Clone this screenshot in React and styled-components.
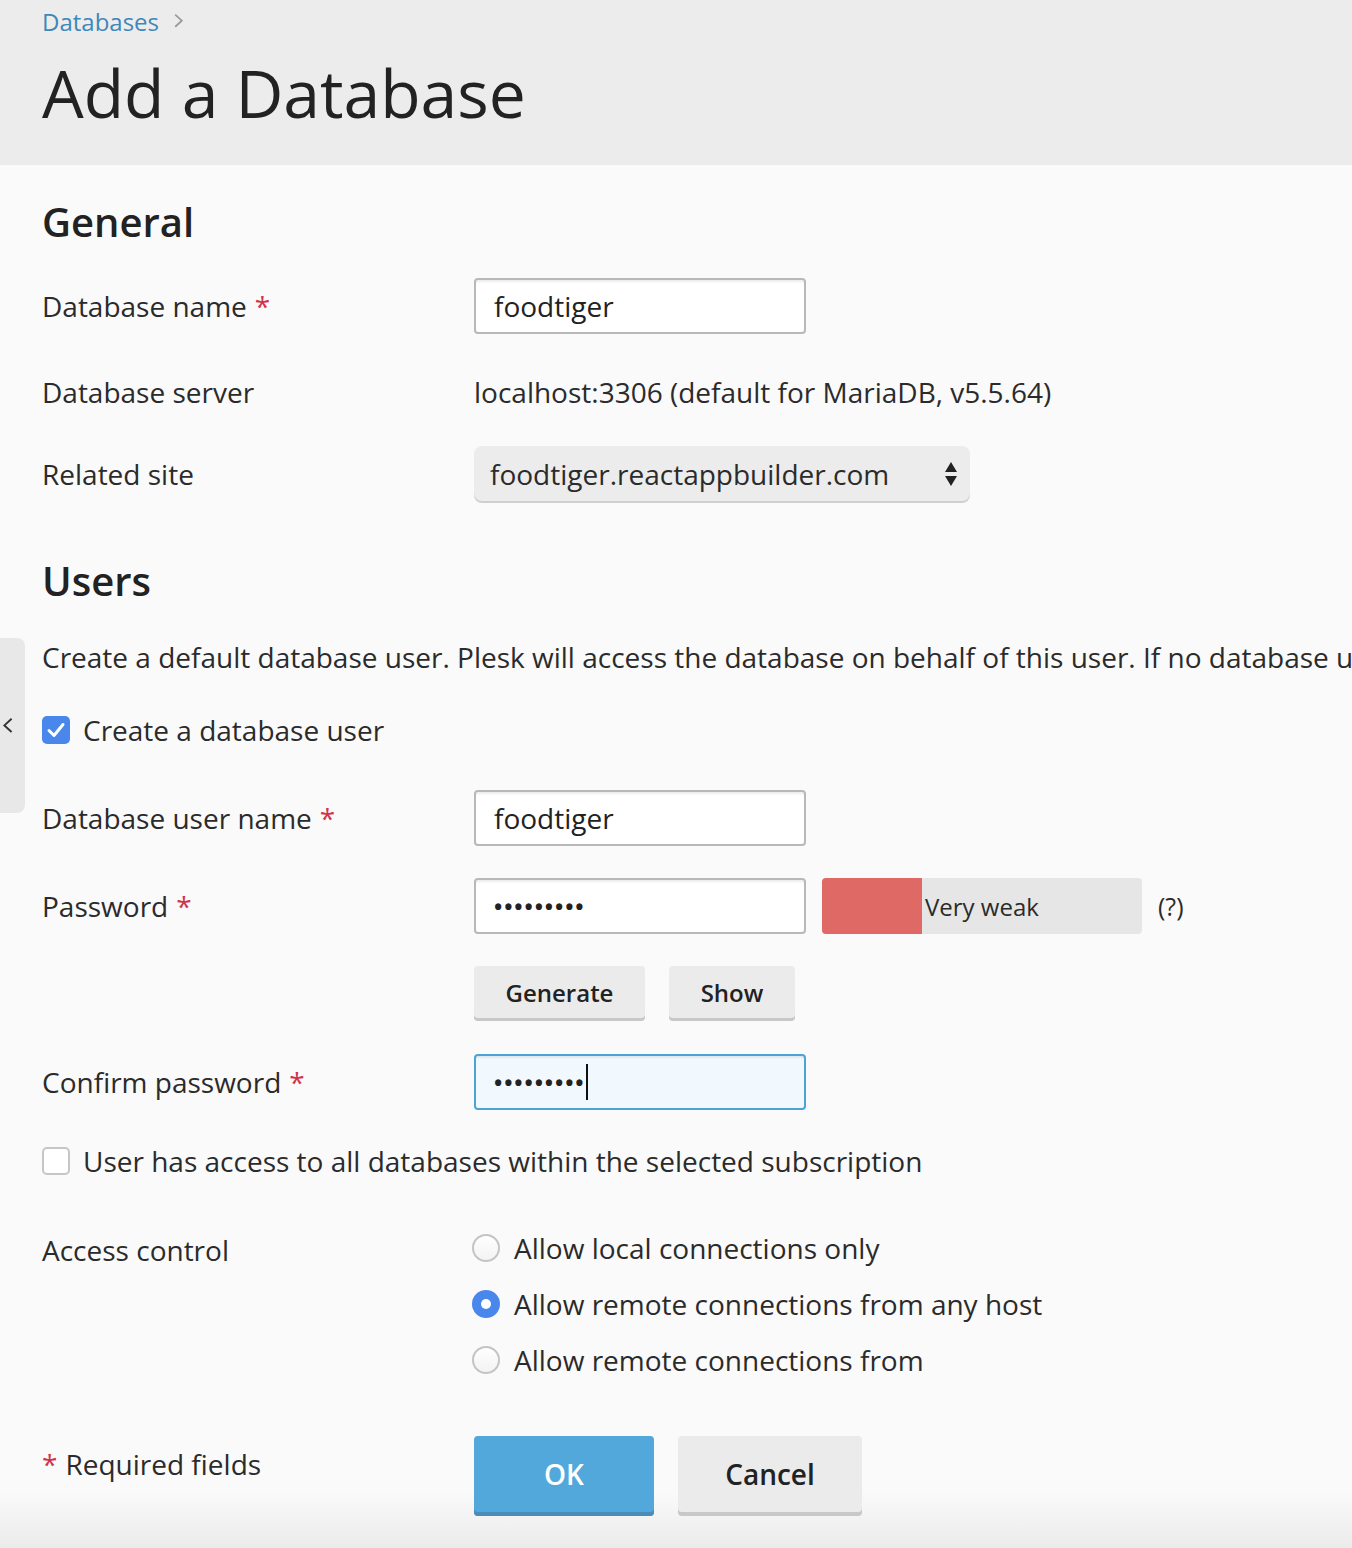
import React from 'react';
import styled, { createGlobalStyle } from 'styled-components';

const GlobalStyle = createGlobalStyle`
  html, body {
    margin: 0;
    padding: 0;
  }
  body {
    font-family: "Open Sans", "Noto Sans", sans-serif;
    color: #2b2b2b;
    background: linear-gradient(to bottom, #fafafa 0, #fafafa 1492px, #ebebeb 1548px);
    min-height: 1548px;
    overflow: hidden;
  }
`;

const Page = styled.div`
  position: relative;
  width: 1352px;
  min-height: 1548px;
  overflow: hidden;
`;

const Header = styled.header`
  background: #ececec;
  height: 165px;
  padding: 0 42px;
  box-sizing: border-box;
`;

const Crumbs = styled.div`
  display: flex;
  align-items: center;
  gap: 14px;
  height: 42px;
  font-size: 24px;
  color: #3d88bb;
`;

const CrumbArrow = styled.span`
  color: #999;
  display: flex;
  align-items: center;
`;

const Title = styled.h1`
  margin: 0;
  font-size: 66px;
  font-weight: 400;
  line-height: 100px;
  color: #222;
`;

const Content = styled.main`
  padding: 0 42px;
`;

const SectionTitle = styled.h2`
  margin: ${(p) => p.$top}px 0 0;
  font-size: 40px;
  font-weight: 600;
  line-height: 54px;
  color: #222;
`;

const Row = styled.div`
  display: grid;
  grid-template-columns: 432px auto;
  align-items: ${(p) => (p.$start ? 'start' : 'center')};
  min-height: 55px;
  margin-top: ${(p) => p.$top}px;
  font-size: 28px;
`;

const Label = styled.div`
  line-height: 40px;
  padding-top: ${(p) => p.$pad || 0}px;
`;

const Req = styled.span`
  color: #d2334c;
  margin: ${(p) => (p.$lead ? '0 8px 0 0' : '0 0 0 8px')};
`;

const Field = styled.div`
  display: flex;
  align-items: center;
  gap: 16px;
`;

const TextInput = styled.div`
  box-sizing: border-box;
  width: 332px;
  height: 56px;
  display: flex;
  align-items: center;
  padding-left: 18px;
  font-size: 28px;
  border: 2px solid ${(p) => (p.$focus ? '#4da3d6' : '#b8b8b8')};
  border-radius: 4px;
  background: ${(p) => (p.$focus ? '#f1f8fe' : '#fff')};
  box-shadow: inset 0 3px 2px -1px rgba(0, 0, 0, 0.07);
  color: #222;
`;

const Dots = styled.span`
  font-size: 22px;
  letter-spacing: 1.9px;
  font-weight: 700;
`;

const Caret = styled.span`
  display: inline-block;
  width: 2px;
  height: 36px;
  background: #111;
  margin-left: 0;
`;

const Plain = styled.div`
  line-height: 40px;
`;

const Select = styled.div`
  box-sizing: border-box;
  width: 496px;
  height: 55px;
  display: flex;
  align-items: center;
  justify-content: space-between;
  padding: 0 12px 0 16px;
  background: #ececec;
  border-radius: 8px;
  box-shadow: 0 2px 0 #cfcfcf;
`;

const Strength = styled.div`
  width: 320px;
  height: 56px;
  display: flex;
  align-items: center;
  background: #e6e6e6;
  border-radius: 4px;
  overflow: hidden;
  font-size: 24px;
`;

const StrengthFill = styled.div`
  width: 100px;
  height: 100%;
  background: #df6965;
  margin-right: 3px;
`;

const Hint = styled.span`
  font-size: 25px;
`;

const Buttons = styled.div`
  display: flex;
  gap: 24px;
`;

const Button = styled.button`
  font-family: inherit;
  font-size: ${(p) => (p.$big ? 28 : 24)}px;
  font-weight: 600;
  width: ${(p) => p.$w}px;
  height: ${(p) => p.$h}px;
  border: none;
  border-radius: 4px;
  color: ${(p) => (p.$primary ? '#fff' : '#222')};
  background: ${(p) => (p.$primary ? '#52a8da' : '#ebebeb')};
  box-shadow: inset 0 -${(p) => (p.$big ? 4 : 3)}px 0 ${(p) => (p.$primary ? '#4a8db8' : '#c8c8c8')};
  padding: 0 0 ${(p) => (p.$big ? 4 : 3)}px;
`;

const Intro = styled.div`
  margin-top: ${(p) => p.$top}px;
  font-size: 28px;
  line-height: 40px;
  white-space: nowrap;
`;

const CheckRow = styled.label`
  display: flex;
  align-items: center;
  gap: 13px;
  font-size: 28px;
  line-height: 40px;
  margin-top: ${(p) => p.$top}px;
  white-space: nowrap;
`;

const Box = styled.span`
  box-sizing: border-box;
  width: 28px;
  height: 28px;
  border-radius: 5px;
  display: flex;
  align-items: center;
  justify-content: center;
  background: ${(p) => (p.$on ? '#4a87ec' : '#fff')};
  border: ${(p) => (p.$on ? 'none' : '2px solid #c6c6c6')};
`;

const Radios = styled.div`
  display: flex;
  flex-direction: column;
`;

const RadioOption = styled.div`
  display: flex;
  align-items: center;
  gap: 14px;
  height: 56px;
  margin-left: -2px;
`;

const RadioDot = styled.span`
  box-sizing: border-box;
  width: 28px;
  height: 28px;
  border-radius: 50%;
  display: flex;
  align-items: center;
  justify-content: center;
  background: ${(p) => (p.$on ? '#4a87ec' : 'linear-gradient(#fff, #f3f3f3)')};
  border: ${(p) => (p.$on ? 'none' : '2px solid #c4c4c4')};
  &::after {
    content: '';
    display: ${(p) => (p.$on ? 'block' : 'none')};
    width: 10px;
    height: 10px;
    border-radius: 50%;
    background: #fff;
  }
`;

const SideTab = styled.div`
  position: absolute;
  left: 0;
  top: 638px;
  width: 25px;
  height: 175px;
  background: #e8e8e8;
  border-radius: 0 8px 8px 0;
  display: flex;
  align-items: center;
  padding-left: 2px;
  box-sizing: border-box;
`;

const Chevron = ({ dir = 'right', size = 14, color = '#999', w = 2 }) => (
  <svg width={size} height={size * 1.4} viewBox="0 0 10 14" fill="none">
    <path
      d={dir === 'right' ? 'M2 1.5 L8 7 L2 12.5' : 'M8 1.5 L2 7 L8 12.5'}
      stroke={color}
      strokeWidth={w}
    />
  </svg>
);

const Tick = () => (
  <svg width="20" height="18" viewBox="0 0 20 18" fill="none">
    <path d="M3 9.5 L8 14.5 L17 3.5" stroke="#fff" strokeWidth="3" strokeLinecap="round" strokeLinejoin="round" />
  </svg>
);

const Arrows = () => (
  <svg width="14" height="28" viewBox="0 0 14 28">
    <path d="M7 2 L13 12 H1 Z" fill="#222" />
    <path d="M7 26 L13 16 H1 Z" fill="#222" />
  </svg>
);

export default function App() {
  return (
    <Page>
      <GlobalStyle />
      <Header>
        <Crumbs>
          <span>Databases</span>
          <CrumbArrow>
            <Chevron size={11} color="#9a9a9a" w={1.6} />
          </CrumbArrow>
        </Crumbs>
        <Title>Add a Database</Title>
      </Header>

      <SideTab>
        <Chevron dir="left" size={12} color="#333" w={1.6} />
      </SideTab>

      <Content>
        <SectionTitle $top={30}>General</SectionTitle>

        <Row $top={29}>
          <Label>
            Database name<Req>*</Req>
          </Label>
          <TextInput>foodtiger</TextInput>
        </Row>

        <Row $top={30}>
          <Label>Database server</Label>
          <Plain>localhost:3306 (default for MariaDB, v5.5.64)</Plain>
        </Row>

        <Row $top={27}>
          <Label>Related site</Label>
          <Select>
            <span>foodtiger.reactappbuilder.com</span>
            <Arrows />
          </Select>
        </Row>

        <SectionTitle $top={53}>Users</SectionTitle>

        <Intro $top={29}>
          Create a default database user. Plesk will access the database on behalf of this user. If no database u
        </Intro>

        <CheckRow $top={33}>
          <Box $on>
            <Tick />
          </Box>
          Create a database user
        </CheckRow>

        <Row $top={40}>
          <Label>
            Database user name<Req>*</Req>
          </Label>
          <TextInput>foodtiger</TextInput>
        </Row>

        <Row $top={32}>
          <Label>
            Password<Req>*</Req>
          </Label>
          <Field>
            <TextInput>
              <Dots>•••••••••</Dots>
            </TextInput>
            <Strength>
              <StrengthFill />
              Very weak
            </Strength>
            <Hint>(?)</Hint>
          </Field>
        </Row>

        <Row $top={32}>
          <Label />
          <Buttons>
            <Button $w={171} $h={55}>Generate</Button>
            <Button $w={126} $h={55}>Show</Button>
          </Buttons>
        </Row>

        <Row $top={33}>
          <Label>
            Confirm password<Req>*</Req>
          </Label>
          <TextInput $focus>
            <Dots>•••••••••</Dots>
            <Caret />
          </TextInput>
        </Row>

        <CheckRow $top={31}>
          <Box />
          User has access to all databases within the selected subscription
        </CheckRow>

        <Row $top={39} $start>
          <Label $pad={10}>Access control</Label>
          <Radios>
            <RadioOption>
              <RadioDot />
              Allow local connections only
            </RadioOption>
            <RadioOption>
              <RadioDot $on />
              Allow remote connections from any host
            </RadioOption>
            <RadioOption>
              <RadioDot />
              Allow remote connections from
            </RadioOption>
          </Radios>
        </Row>

        <Row $top={48} $start>
          <Label $pad={8}>
            <Req $lead>*</Req>Required fields
          </Label>
          <Buttons>
            <Button $primary $big $w={180} $h={80}>OK</Button>
            <Button $big $w={184} $h={80}>Cancel</Button>
          </Buttons>
        </Row>
      </Content>
    </Page>
  );
}
